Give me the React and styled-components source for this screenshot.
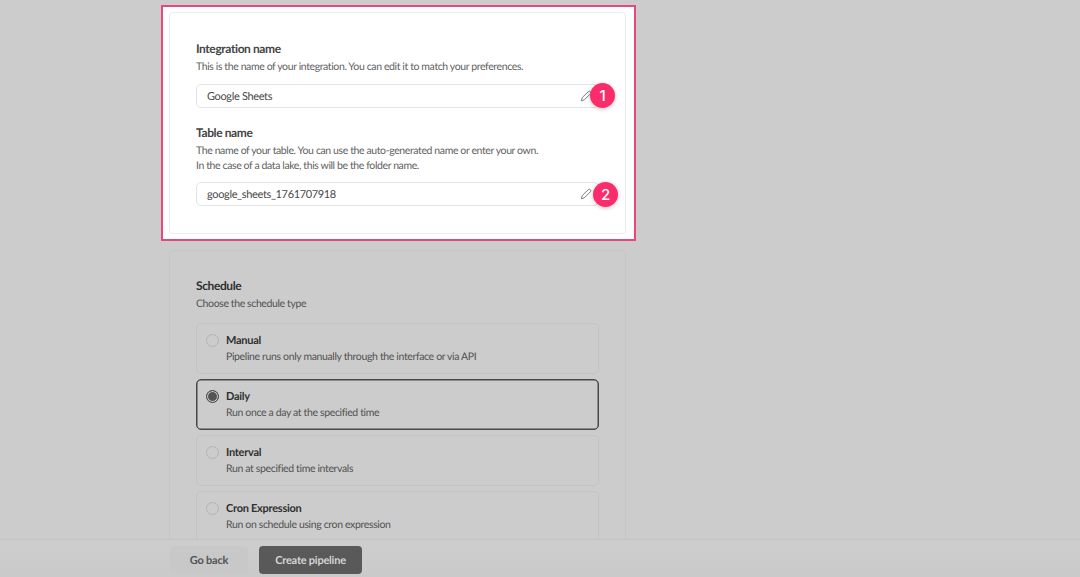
import React from "react";
import styled, { createGlobalStyle } from "styled-components";

const GlobalStyle = createGlobalStyle`
  html, body, #root {
    margin: 0;
    height: 100%;
  }
  body {
    font-family: "Lato", "Liberation Sans", sans-serif;
    background: #cccccc;
    color: #3a3a3a;
    overflow: hidden;
    text-rendering: geometricPrecision;
  }
`;

const Page = styled.div`
  height: 577px;
  display: flex;
  flex-direction: column;
  overflow: hidden;
`;

const Main = styled.main`
  flex: 1;
  min-height: 0;
  overflow: hidden;
  padding: 5px 0 0 161px;
`;

const Spotlight = styled.section`
  box-sizing: border-box;
  width: 475px;
  height: 236px;
  padding: 5px 8px 5px 6px;
  background: #ffffff;
  border: 2px solid #e5487d;
  margin-bottom: 9px;
`;

const Card = styled.div`
  box-sizing: border-box;
  height: 222px;
  border: 1px solid ${(p) => (p.$dimmed ? "#c6c6c6" : "#ececec")};
  border-radius: 4px;
  padding: 27px 26px;
  background: ${(p) => (p.$dimmed ? "#cccccc" : "#ffffff")};
`;

const ScheduleCard = styled(Card)`
  width: 457px;
  margin-left: 8px;
  height: 340px;
  padding-top: 26px;
`;

const Title = styled.h2`
  margin: 0;
  font-size: 12px;
  letter-spacing: -0.4px;
  line-height: 17px;
  font-weight: 700;
  color: ${(p) => (p.$dimmed ? "#303030" : "#454545")};
`;

const Hint = styled.p`
  margin: 3px 0 0;
  font-size: 10.5px;
  letter-spacing: -0.39px;
  line-height: 15px;
  color: ${(p) => (p.$dimmed ? "#525252" : "#5f5f5f")};
`;

const FieldGroup = styled.div`
  & + & {
    margin-top: 16px;
  }
`;

const InputRow = styled.div`
  position: relative;
  box-sizing: border-box;
  height: 24px;
  margin-top: ${(p) => p.$top}px;
  padding: 0 6px 0 10px;
  display: flex;
  align-items: center;
  justify-content: space-between;
  border: 1px solid #e4e4e4;
  border-radius: 5px;
  font-size: 11px;
  letter-spacing: -0.35px;
  color: #484848;
`;

const Badge = styled.span`
  position: absolute;
  top: ${(p) => p.$top}px;
  right: ${(p) => p.$right}px;
  width: 25px;
  height: 25px;
  border-radius: 50%;
  background: #fb2c6c;
  color: #ffffff;
  font-size: 15px;
  font-weight: 500;
  letter-spacing: 0;
  font-family: "Inter", "Liberation Sans", sans-serif;
  display: flex;
  align-items: center;
  justify-content: center;
  box-shadow: 0 1px 4px rgba(0, 0, 0, 0.25);
`;

const OptionList = styled.div`
  display: flex;
  flex-direction: column;
  gap: 5px;
  margin-top: 11px;
`;

const Option = styled.div`
  box-sizing: border-box;
  height: 51px;
  padding: 9px 9px;
  display: flex;
  gap: 7px;
  border-radius: 5px;
  border: 1px solid ${(p) => (p.$selected ? "#484848" : "#c3c3c3")};
  box-shadow: ${(p) => (p.$selected ? "inset 0 0 0 0.5px #484848" : "none")};
`;

const Radio = styled.span`
  box-sizing: border-box;
  flex: none;
  width: 13px;
  height: 13px;
  margin-top: 1px;
  border-radius: 50%;
  border: 1px solid ${(p) => (p.$checked ? "#4a4a4a" : "#b4b4b4")};
  background: ${(p) => (p.$checked ? "#555555" : "transparent")};
  box-shadow: ${(p) => (p.$checked ? "inset 0 0 0 1px #cccccc" : "none")};
`;

const OptionTitle = styled.div`
  font-size: 11px;
  letter-spacing: -0.27px;
  line-height: 15px;
  font-weight: 700;
  color: #303030;
`;

const OptionText = styled.div`
  margin-top: 2px;
  font-size: 10.5px;
  letter-spacing: -0.36px;
  line-height: 15px;
  color: #525252;
`;

const Footer = styled.footer`
  box-sizing: border-box;
  flex: none;
  height: 38px;
  padding: 6px 0 0 170px;
  display: flex;
  align-items: flex-start;
  gap: 11px;
  border-top: 1px solid #c4c4c4;
  background: linear-gradient(#cdcdcd, #cacaca);
`;

const Button = styled.button`
  box-sizing: border-box;
  height: 28px;
  width: ${(p) => p.$width}px;
  padding: 0;
  border: 0;
  border-radius: 4px;
  font-family: inherit;
  text-rendering: geometricPrecision;
  font-size: 11px;
  letter-spacing: -0.22px;
  font-weight: 700;
  background: ${(p) => (p.$primary ? "#595959" : "#c8c8c8")};
  color: ${(p) => (p.$primary ? "#d4d4d4" : "#555555")};
`;

const Pencil = () => (
  <svg width="12" height="12" viewBox="0 0 24 24" fill="none" stroke="#6f6f6f" strokeWidth="1.8" strokeLinecap="round" strokeLinejoin="round">
    <path d="M16.8 3.2a3 3 0 0 1 4.2 4.2L8.6 19.8 2.6 21.6l1.8-6z" />
  </svg>
);

const options = [
  { name: "Manual", text: "Pipeline runs only manually through the interface or via API" },
  { name: "Daily", text: "Run once a day at the specified time", selected: true },
  { name: "Interval", text: "Run at specified time intervals" },
  { name: "Cron Expression", text: "Run on schedule using cron expression" },
];

export default function App() {
  return (
    <Page>
      <GlobalStyle />
      <Main>
        <Spotlight>
          <Card>
            <FieldGroup>
              <Title>Integration name</Title>
              <Hint>This is the name of your integration. You can edit it to match your preferences.</Hint>
              <InputRow $top={9}>
                Google Sheets
                <Pencil />
                <Badge $right={-17} $top={-2}>1</Badge>
              </InputRow>
            </FieldGroup>
            <FieldGroup>
              <Title>Table name</Title>
              <Hint>
                The name of your table. You can use the auto-generated name or enter your own.
                <br />
                In the case of a data lake, this will be the folder name.
              </Hint>
              <InputRow $top={8}>
                google_sheets_1761707918
                <Pencil />
                <Badge $right={-20} $top={-1}>2</Badge>
              </InputRow>
            </FieldGroup>
          </Card>
        </Spotlight>
        <ScheduleCard $dimmed>
          <Title $dimmed>Schedule</Title>
          <Hint $dimmed>Choose the schedule type</Hint>
          <OptionList>
            {options.map((o) => (
              <Option key={o.name} $selected={o.selected}>
                <Radio $checked={o.selected} />
                <div>
                  <OptionTitle>{o.name}</OptionTitle>
                  <OptionText>{o.text}</OptionText>
                </div>
              </Option>
            ))}
          </OptionList>
        </ScheduleCard>
      </Main>
      <Footer>
        <Button $width={78}>Go back</Button>
        <Button $width={103} $primary>Create pipeline</Button>
      </Footer>
    </Page>
  );
}
